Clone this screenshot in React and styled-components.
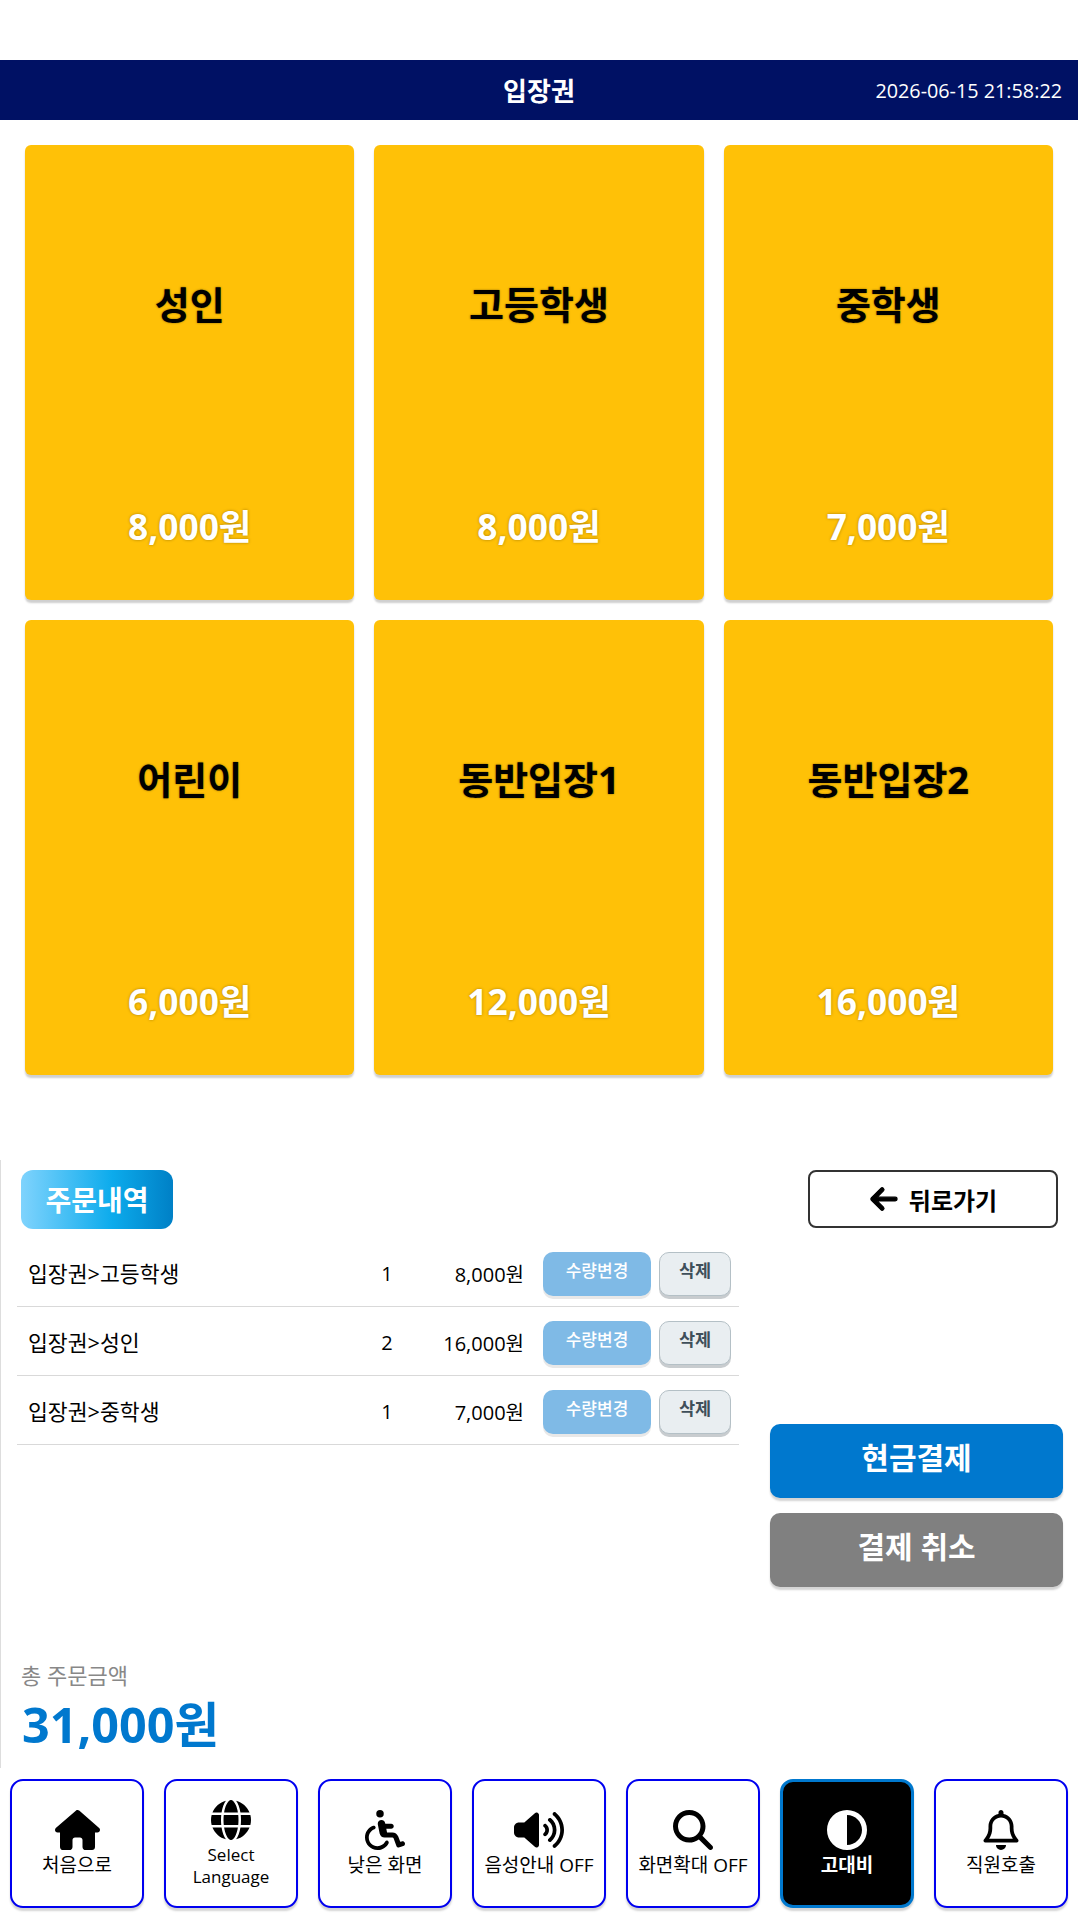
import React from 'react';
import styled, { createGlobalStyle } from 'styled-components';
import {
  FaHouse, FaGlobe, FaWheelchair, FaVolumeHigh, FaMagnifyingGlass,
  FaCircleHalfStroke, FaRegBell, FaArrowLeft,
} from 'react-icons/fa6';

const Global = createGlobalStyle`
  html, body { margin: 0; padding: 0; background: #fff; }
  * { box-sizing: border-box; }
  body { font-family: "Open Sans", "Noto Sans CJK KR", sans-serif; color: #000; }
`;

const Page = styled.div`
  width: 1080px;
  height: 1920px;
  padding-top: 60px;
  overflow: hidden;
  display: flex;
  flex-direction: column;
`;

const Header = styled.header`
  width: 1078px;
  height: 60px;
  background: #001164;
  color: #fff;
  display: grid;
  grid-template-columns: 1fr auto 1fr;
  align-items: center;
  padding-right: 16px;
`;

const HeaderTitle = styled.h1`
  grid-column: 2;
  margin: 0 0 0 16px;
  font-size: 26px;
  font-weight: 700;
`;

const Clock = styled.div`
  grid-column: 3;
  justify-self: end;
  font-size: 19.8px;
`;

const TicketGrid = styled.div`
  width: 1078px;
  padding: 25px;
  display: grid;
  grid-template-columns: repeat(3, 1fr);
  grid-auto-rows: 455px;
  gap: 20px;
`;

const Ticket = styled.button`
  border: 0;
  border-radius: 6px;
  background: #ffc107;
  box-shadow: 0 3px 2px #cfcfcf;
  font-family: inherit;
  display: flex;
  flex-direction: column;
  align-items: center;
  padding: 0;
`;

const TicketName = styled.span`
  margin-top: 135px;
  font-size: 38px;
  line-height: 48px;
  font-weight: 700;
  color: #000;
  text-shadow: 0 0 2px rgba(0, 0, 0, 0.5);
`;

const TicketPrice = styled.span`
  margin-top: 174px;
  font-size: 35.3px;
  line-height: 48px;
  font-weight: 700;
  color: #fff;
  text-shadow: 0 0 3px rgba(0, 0, 0, 0.35);
`;

const OrderSection = styled.section`
  margin-top: 60px;
  width: 1078px;
  height: 608px;
  border-left: 1px solid #ddd;
  display: flex;
`;

const OrderColumn = styled.div`
  width: 755px;
  padding: 10px 0 0 16px;
  display: flex;
  flex-direction: column;
`;

const OrderBadge = styled.div`
  margin-left: 4px;
  width: 152px;
  height: 59px;
  padding-bottom: 2px;
  border-radius: 12px;
  background: linear-gradient(90deg, #7fd3fd 0%, #0cabec 60%, #0080c6 100%);
  color: #fff;
  font-size: 28px;
  font-weight: 700;
  display: flex;
  align-items: center;
  justify-content: center;
`;

const OrderList = styled.div`
  margin-top: 9px;
  width: 722px;
`;

const OrderRow = styled.div`
  height: 69px;
  border-bottom: 1px solid #d9d9d9;
  display: flex;
  align-items: center;
  padding-left: 11px;
  font-size: 20px;
`;

const ItemName = styled.span`
  width: 344px;
  font-size: 21.6px;
`;

const ItemQty = styled.span`
  width: 30px;
  margin-top: 2px;
  text-align: center;
`;

const ItemPrice = styled.span`
  width: 122px;
  margin-top: 2px;
  text-align: right;
`;

const ChangeButton = styled.button`
  margin: 4px 0 0 19px;
  width: 108px;
  height: 44px;
  border: 0;
  border-radius: 10px;
  background: #7fbae6;
  box-shadow: 0 3px 0 #e8e8e8;
  color: #fff;
  font-family: inherit;
  font-size: 17px;
  font-weight: 500;
  padding: 0 0 10px;
`;

const DeleteButton = styled.button`
  margin: 4px 0 0 8px;
  width: 72px;
  height: 44px;
  border: 1px solid #b4c0c6;
  border-radius: 10px;
  background: #e9eef1;
  box-shadow: 0 3px 0 #c8cccf;
  color: #3f4f5a;
  font-family: inherit;
  font-size: 17.5px;
  font-weight: 700;
  padding: 0 0 10px;
`;

const Total = styled.div`
  margin-top: auto;
  padding: 0 0 12px 4px;
`;

const TotalLabel = styled.div`
  font-size: 22px;
  line-height: 34px;
  color: #888;
`;

const TotalValue = styled.div`
  margin-left: 1px;
  color: #0078ce;
  font-size: 48.5px;
  line-height: 64px;
  font-weight: 700;
`;

const ActionColumn = styled.div`
  flex: 1;
  padding: 10px 15px 0 14px;
  display: flex;
  flex-direction: column;
  align-items: flex-end;
`;

const BackButton = styled.button`
  width: 250px;
  height: 58px;
  margin-right: 5px;
  border: 2px solid #333;
  border-radius: 8px;
  background: #fff;
  color: #000;
  font-family: inherit;
  font-size: 24px;
  font-weight: 700;
  display: flex;
  align-items: center;
  justify-content: center;
  gap: 10px;
  svg { width: 30px; height: 30px; stroke: currentColor; stroke-width: 20px; }
`;

const PayButton = styled.button`
  width: 293px;
  height: 74px;
  margin-top: ${p => p.$top}px;
  border: 0;
  border-radius: 10px;
  background: ${p => p.$bg};
  box-shadow: 0 3px 2px #d4d4d4;
  color: #fff;
  font-family: inherit;
  font-size: 30px;
  font-weight: 700;
  padding: 0 0 10px;
`;

const Footer = styled.footer`
  padding: 11px 0 0 10px;
  display: flex;
  gap: 20px;
`;

const FooterButton = styled.button`
  width: 134px;
  height: 129px;
  border: ${p => (p.$active ? '3px solid #0078ce' : '2px solid #0000f0')};
  border-radius: 13px;
  background: ${p => (p.$active ? '#000' : '#fff')};
  color: ${p => (p.$active ? '#fff' : '#000')};
  box-shadow: 0 3px 2px #d4d4d4;
  font-family: inherit;
  font-size: 19px;
  font-weight: ${p => (p.$active ? 700 : 400)};
  line-height: 23px;
  padding: 0;
  display: flex;
  flex-direction: column;
  align-items: center;
  justify-content: center;
  gap: 4px;
  svg { height: 40px; width: ${p => p.$iconWidth}px; flex: none; }
`;

const LatinLabel = styled.span`
  display: block;
  font-size: 17px;
  line-height: 22px;
`;

const tickets = [
  ['성인', '8,000원'], ['고등학생', '8,000원'], ['중학생', '7,000원'],
  ['어린이', '6,000원'], ['동반입장1', '12,000원'], ['동반입장2', '16,000원'],
];

const orders = [
  ['입장권>고등학생', '1', '8,000원'],
  ['입장권>성인', '2', '16,000원'],
  ['입장권>중학생', '1', '7,000원'],
];

const tools = [
  [FaHouse, 45, '처음으로'],
  [FaGlobe, 40, <LatinLabel>Select<br />Language</LatinLabel>],
  [FaWheelchair, 40, '낮은 화면'],
  [FaVolumeHigh, 50, '음성안내 OFF'],
  [FaMagnifyingGlass, 40, '화면확대 OFF'],
  [FaCircleHalfStroke, 40, '고대비', true],
  [FaRegBell, 36, '직원호출'],
];

export default function App() {
  return (
    <Page>
      <Global />
      <Header>
        <HeaderTitle>입장권</HeaderTitle>
        <Clock>2026-06-15 21:58:22</Clock>
      </Header>
      <TicketGrid>
        {tickets.map(([name, price]) => (
          <Ticket key={name}>
            <TicketName>{name}</TicketName>
            <TicketPrice>{price}</TicketPrice>
          </Ticket>
        ))}
      </TicketGrid>
      <OrderSection>
        <OrderColumn>
          <OrderBadge>주문내역</OrderBadge>
          <OrderList>
            {orders.map(([name, qty, price]) => (
              <OrderRow key={name}>
                <ItemName>{name}</ItemName>
                <ItemQty>{qty}</ItemQty>
                <ItemPrice>{price}</ItemPrice>
                <ChangeButton>수량변경</ChangeButton>
                <DeleteButton>삭제</DeleteButton>
              </OrderRow>
            ))}
          </OrderList>
          <Total>
            <TotalLabel>총 주문금액</TotalLabel>
            <TotalValue>31,000원</TotalValue>
          </Total>
        </OrderColumn>
        <ActionColumn>
          <BackButton><FaArrowLeft />뒤로가기</BackButton>
          <PayButton $top={196} $bg="#0078ce">현금결제</PayButton>
          <PayButton $top={15} $bg="#808080">결제 취소</PayButton>
        </ActionColumn>
      </OrderSection>
      <Footer>
        {tools.map(([Icon, iconWidth, label, active], i) => (
          <FooterButton key={i} $active={active} $iconWidth={iconWidth}>
            <Icon />
            <span>{label}</span>
          </FooterButton>
        ))}
      </Footer>
    </Page>
  );
}
